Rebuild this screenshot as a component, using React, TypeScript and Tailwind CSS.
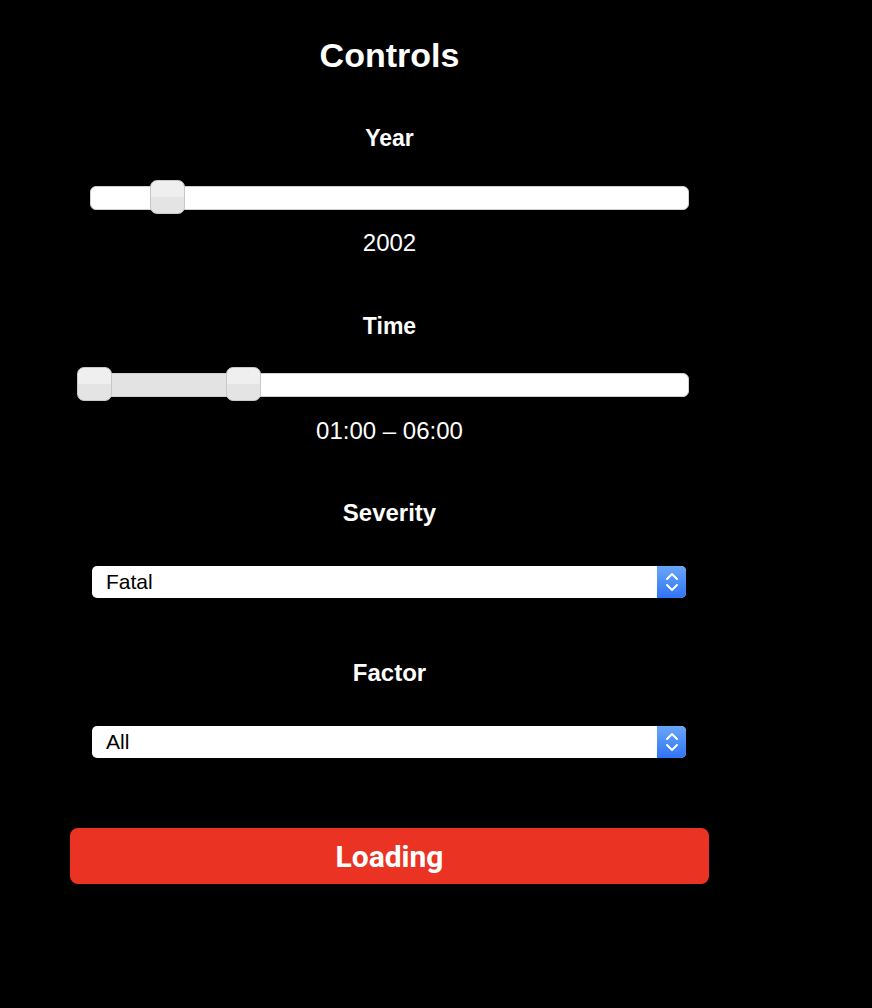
import React from 'react';

const Handle = ({ className }: { className: string }) => (
  <div
    className={`absolute top-[-7px] h-[34px] w-[35px] rounded-[7px] border border-[#c8c8c8] bg-gradient-to-b from-[#efefef] from-50% to-[#e4e4e4] to-50% ${className}`}
  />
);

const Stepper = () => (
  <div className="flex h-full w-[29px] items-center justify-center rounded-r-[5px] bg-gradient-to-b from-[#69a6f8] to-[#2f74f5]">
    <svg width="16" height="26" viewBox="0 0 16 26" fill="none" stroke="white" strokeWidth="2" strokeLinecap="round" strokeLinejoin="round">
      <path d="M3 10 L8 5 L13 10" />
      <path d="M3 16 L8 21 L13 16" />
    </svg>
  </div>
);

const Select = ({ value }: { value: string }) => (
  <div className="ml-[22px] mr-[23px] flex h-[32px] items-center justify-between rounded-[5px] bg-white">
    <span className="pl-[14px] text-[21px] text-black">{value}</span>
    <Stepper />
  </div>
);

export default function App() {
  return (
    <div className="min-h-[1008px] w-full bg-black text-white" style={{ fontFamily: '"Liberation Sans", Arial, sans-serif' }}>
      <div className="ml-[70px] flex w-[639px] flex-col pt-[35px]">
        <h1 className="text-center text-[34px] font-bold leading-[40px]">Controls</h1>

        {/* Year */}
        <div className="mt-[49px] text-center text-[23px] font-bold leading-[28px]">Year</div>
        <div className="relative mx-[20px] mt-[34px] h-[24px] rounded-[6px] border border-[#cfcfcf] bg-white">
          <Handle className="left-[59px]" />
        </div>
        <div className="mt-[20px] text-center text-[24px] leading-[26px]">2002</div>

        {/* Time */}
        <div className="mt-[56px] text-center text-[23px] font-bold leading-[28px]">Time</div>
        <div className="relative mx-[20px] mt-[33px] h-[24px] rounded-[6px] border border-[#cfcfcf] bg-white">
          <div className="absolute left-0 top-0 h-full w-[150px] rounded-l-[6px] bg-[#e3e3e3]" />
          <Handle className="left-[-14px]" />
          <Handle className="left-[135px]" />
        </div>
        <div className="mt-[21px] text-center text-[24px] leading-[26px]">01:00 – 06:00</div>

        {/* Severity */}
        <div className="mt-[55px] text-center text-[24px] font-bold leading-[28px]">Severity</div>
        <div className="mt-[39px]">
          <Select value="Fatal" />
        </div>

        {/* Factor */}
        <div className="mt-[61px] text-center text-[24px] font-bold leading-[28px]">Factor</div>
        <div className="mt-[39px]">
          <Select value="All" />
        </div>

        <button
          className="mt-[70px] h-[56px] w-full rounded-[8px] bg-[#eb3323] text-[30px] font-bold text-white"
          style={{ fontFamily: 'Roboto, "Liberation Sans", sans-serif' }}
        >
          Loading
        </button>
      </div>
    </div>
  );
}
